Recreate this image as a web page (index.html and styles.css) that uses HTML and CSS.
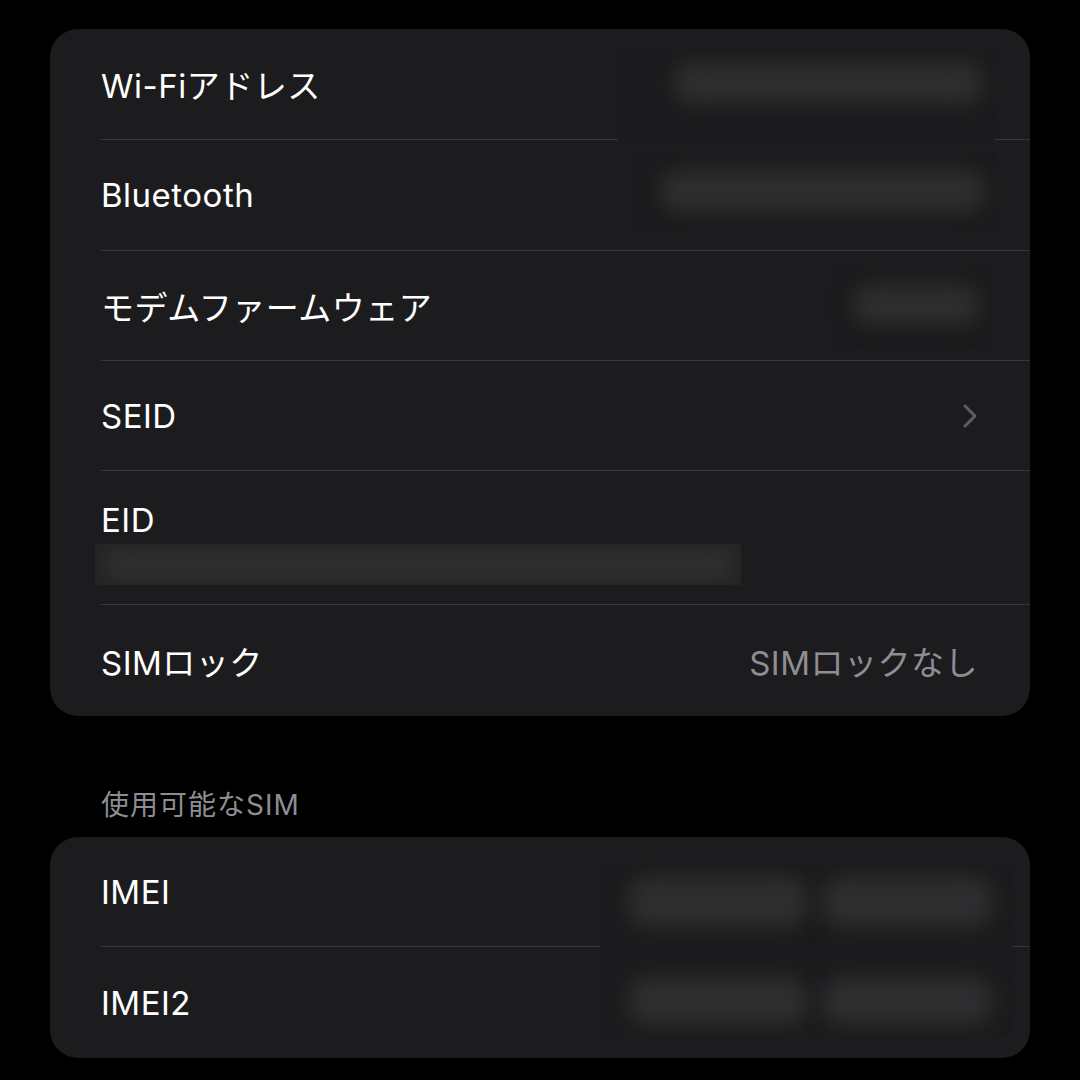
FILE: index.html
```html
<!DOCTYPE html>
<html lang="ja">
<head>
<meta charset="UTF-8">
<meta name="viewport" content="width=device-width, initial-scale=1.0">
<title>情報</title>
<link rel="stylesheet" href="styles.css">
</head>
<body>

<div class="page">
  <div class="group">
    <div class="row">
      <span class="label">Wi-Fiアドレス</span>
      <div class="redact r-wifi"><span class="blob"></span></div>
    </div>
    <div class="row">
      <span class="label">Bluetooth</span>
      <div class="redact r-bt"><span class="blob"></span></div>
    </div>
    <div class="row">
      <span class="label">モデムファームウェア</span>
      <div class="redact r-modem"><span class="blob"></span></div>
    </div>
    <div class="row link">
      <span class="label">SEID</span>
      <svg class="chevron" width="16" height="26" viewBox="0 0 16 26">
        <path d="M3 3 L13 13 L3 23" fill="none" stroke="currentColor" stroke-width="3" stroke-linecap="round" stroke-linejoin="round"/>
      </svg>
    </div>
    <div class="row tall">
      <span class="label">EID</span>
      <div class="redact r-eid"><span class="blob"></span></div>
    </div>
    <div class="row last">
      <span class="label">SIMロック</span>
      <span class="value">SIMロックなし</span>
    </div>
  </div>

  <div class="section-title">使用可能なSIM</div>

  <div class="group sims">
    <div class="redact r-imei">
      <span class="blob b1"></span>
      <span class="blob b2"></span>
      <span class="blob b3"></span>
      <span class="blob b4"></span>
    </div>
    <div class="row">
      <span class="label">IMEI</span>
    </div>
    <div class="row last">
      <span class="label">IMEI2</span>
    </div>
  </div>
</div>

</body>
</html>
```

FILE: styles.css
```css
html, body {
  margin: 0;
  background-color: #000;
}

body {
  font-family: Inter, "Noto Sans CJK JP", sans-serif;
  color: #fff;
}

.page {
  padding: 29px 50px 0 50px;
}

.group {
  position: relative;
  background-color: #1c1c1e;
  border-radius: 28px;
  overflow: hidden;
}

.row {
  position: relative;
  height: 110px;
  margin-left: 51px;
  padding-right: 52px;
  display: flex;
  align-items: center;
  justify-content: space-between;
  border-bottom: 1px solid #38383a;
  box-sizing: border-box;
}

.row:nth-child(1),
.row:nth-child(2) {
  height: 111px;
}

.sims .row:nth-child(2) {
  height: 110px;
}

.row.tall {
  height: 134px;
  align-items: flex-start;
  padding-top: 29px;
}

.row.last {
  height: 111px;
  border-bottom: none;
}

.label {
  font-size: 33px;
  letter-spacing: 0.5px;
}

.value {
  font-size: 33px;
  letter-spacing: 0.5px;
  color: #8e8e93;
}

.chevron {
  color: #5e5e62;
}

.section-title {
  font-size: 28px;
  letter-spacing: 1px;
  color: #8d8d93;
  padding: 67px 0 14px 51px;
}

/* blurred-out values */
.redact {
  position: absolute;
  z-index: 2;
  background-color: #1b1b1d;
  overflow: hidden;
}

.redact .blob {
  position: absolute;
  background-color: #2e2e30;
  border-radius: 20px;
  filter: blur(10px);
}

.r-wifi {
  left: 517px;
  top: 21px;
  width: 377px;
  height: 91px;
}

.r-wifi .blob {
  left: 55px;
  top: 12px;
  width: 310px;
  height: 42px;
}

.r-bt {
  left: 529px;
  top: 12px;
  width: 366px;
  height: 78px;
}

.r-bt .blob {
  left: 30px;
  top: 18px;
  width: 325px;
  height: 42px;
}

.r-modem {
  left: 729px;
  top: 18px;
  width: 162px;
  height: 78px;
}

.r-modem .blob {
  left: 22px;
  top: 16px;
  width: 128px;
  height: 40px;
}

.r-eid {
  left: -6px;
  top: 73px;
  width: 646px;
  height: 41px;
  background-color: #242426;
}

.r-eid .blob {
  left: 8px;
  top: 4px;
  width: 630px;
  height: 33px;
  filter: blur(8px);
}

.r-imei {
  left: 550px;
  top: 26px;
  width: 412px;
  height: 172px;
}

.r-imei .b1 {
  left: 28px;
  top: 14px;
  width: 180px;
  height: 50px;
}

.r-imei .b2 {
  left: 222px;
  top: 14px;
  width: 170px;
  height: 50px;
}

.r-imei .b3 {
  left: 28px;
  top: 114px;
  width: 180px;
  height: 48px;
}

.r-imei .b4 {
  left: 222px;
  top: 114px;
  width: 170px;
  height: 48px;
}
```
